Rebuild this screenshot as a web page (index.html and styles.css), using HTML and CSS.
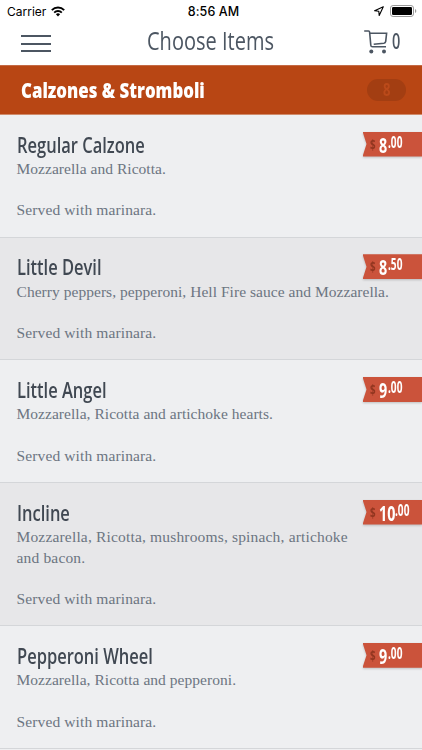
FILE: index.html
```html
<!DOCTYPE html>
<html lang="en">
<head>
  <meta charset="UTF-8" />
  <meta name="viewport" content="width=device-width, initial-scale=1.0"/>
  <title>Choose Items</title>
  <link rel="stylesheet" href="styles.css">
</head>
<body>
  <header>
    <div class="status-bar">
      <div class="carrier">
        <span>Carrier</span>
        <svg width="14" height="11" viewBox="0 0 14 11" fill="none" stroke="#000" stroke-width="1.9">
          <path d="M.8 4.1a8.8 8.8 0 0 1 12.4 0"/>
          <path d="M3.2 6.6a5.4 5.4 0 0 1 7.6 0"/>
          <path d="M7 10.4 4.9 8.3a3 3 0 0 1 4.2 0z" fill="#000" stroke="none"/>
        </svg>
      </div>
      <div class="time">8:56 AM</div>
      <div class="indicators">
        <svg width="10" height="10" viewBox="0 0 10 10" fill="none" stroke="#000" stroke-width="1.1" stroke-linejoin="round">
          <path d="M9.3.7.6 4.8l4.2.4.4 4.2z"/>
        </svg>
        <svg width="27" height="12" viewBox="0 0 27 12">
          <rect x=".5" y=".5" width="23" height="11" rx="2.6" fill="none" stroke="#999"/>
          <rect x="2" y="2" width="20" height="8" rx="1.3"/>
          <path d="M25 4v4q1.3-.6 1.3-2T25 4" fill="#999"/>
        </svg>
      </div>
    </div>
    <div class="nav-bar">
      <button class="menu" aria-label="Menu"><i></i><i></i><i></i></button>
      <h1><span class="condensed">Choose Items</span></h1>
      <button class="cart" aria-label="Cart">
        <svg width="24" height="24" viewBox="0 0 24 24" fill="none" stroke="#4c5662" stroke-width="1.6">
          <path d="M.2 1h4.3q1 0 1.1 1l1.2 13.2q.1 1.6 1.7 1.6H22"/>
          <path d="M6 3.3h16.6l-.9 8.1q-.2 1.6-1.8 1.8L9.7 14.2"/>
          <circle cx="7.3" cy="21.4" r="2" fill="#4c5662" stroke="none"/>
          <circle cx="20" cy="21.4" r="2" fill="#4c5662" stroke="none"/>
        </svg>
        <span class="condensed">0</span>
      </button>
    </div>
  </header>

  <div class="category">
    <h2><span class="condensed">Calzones &amp; Stromboli</span></h2>
    <span class="count"><span class="condensed">8</span></span>
  </div>

  <main>
    <section class="item">
      <div class="details">
        <h3><span class="condensed">Regular Calzone</span></h3>
        <p>Mozzarella and Ricotta.</p>
        <p>Served with marinara.</p>
      </div>
      <div class="price"><div class="ribbon"><small>$</small><b>8</b><sup>.00</sup></div></div>
    </section>
    <section class="item">
      <div class="details">
        <h3><span class="condensed">Little Devil</span></h3>
        <p>Cherry peppers, pepperoni, Hell Fire sauce and Mozzarella.</p>
        <p>Served with marinara.</p>
      </div>
      <div class="price"><div class="ribbon"><small>$</small><b>8</b><sup>.50</sup></div></div>
    </section>
    <section class="item">
      <div class="details">
        <h3><span class="condensed">Little Angel</span></h3>
        <p>Mozzarella, Ricotta and artichoke hearts.</p>
        <p>Served with marinara.</p>
      </div>
      <div class="price"><div class="ribbon"><small>$</small><b>9</b><sup>.00</sup></div></div>
    </section>
    <section class="item">
      <div class="details">
        <h3><span class="condensed">Incline</span></h3>
        <p class="loose">Mozzarella, Ricotta, mushrooms, spinach, artichoke<br>and bacon.</p>
        <p>Served with marinara.</p>
      </div>
      <div class="price"><div class="ribbon"><small>$</small><b class="wide">10</b><sup>.00</sup></div></div>
    </section>
    <section class="item">
      <div class="details">
        <h3><span class="condensed">Pepperoni Wheel</span></h3>
        <p>Mozzarella, Ricotta and pepperoni.</p>
        <p>Served with marinara.</p>
      </div>
      <div class="price"><div class="ribbon"><small>$</small><b>9</b><sup>.00</sup></div></div>
    </section>
  </main>
</body>
</html>
```
FILE: styles.css
```css
* {
  box-sizing: border-box;
}
body {
  font-family: "Open Sans", "Noto Sans", sans-serif;
  margin: 0;
  background: #eeeff1;
  overflow: hidden;
}
h1, h2, h3, p {
  margin: 0;
}
button {
  border: none;
  background: none;
  padding: 0;
  font-family: inherit;
}
svg {
  display: block;
}
.condensed {
  display: inline-block;
  white-space: nowrap;
  transform: scaleX(0.77);
  transform-origin: left center;
}
header {
  height: 65px;
  background: #fff;
}
.status-bar {
  height: 22px;
  padding: 0 5px 0 7px;
  display: grid;
  grid-template-columns: 1fr auto 1fr;
  align-items: center;
  font-family: Inter, "Liberation Sans", sans-serif;
  font-size: 12px;
}
.carrier, .indicators {
  display: flex;
  align-items: center;
  gap: 5px;
}
.time {
  font-weight: 500;
  font-size: 12.5px;
  letter-spacing: 0.1px;
  padding-left: 3px;
}
.indicators {
  justify-content: flex-end;
  gap: 6px;
}
.nav-bar {
  height: 43px;
  padding: 0 20px 0 21px;
  display: grid;
  grid-template-columns: 1fr 129px 1fr;
}
.menu {
  width: 30px;
  height: 17px;
  margin-top: 13px;
  display: flex;
  flex-direction: column;
  justify-content: space-between;
}
.menu i {
  width: 30px;
  height: 2px;
  background: #4c5662;
}
h1 {
  font-size: 26px;
  line-height: 36px;
  font-weight: 400;
  color: #4c5662;
}
.cart {
  display: flex;
  justify-self: end;
  width: 38px;
  margin-top: 8px;
  gap: 4px;
  align-items: flex-start;
  color: #4c5662;
}
.cart svg {
  flex: none;
}
.cart span {
  font-size: 22px;
  line-height: 20px;
  font-weight: 600;
  transform: scaleX(0.66);
}
.category {
  height: 50px;
  padding: 0 16px 0 21px;
  display: flex;
  align-items: center;
  justify-content: space-between;
  background: #b84614;
  border-top: 1px solid #c46a45;
  border-bottom: 1px solid #cf8b6b;
}
h2 {
  font-size: 20.5px;
  line-height: 30px;
  font-weight: 800;
  color: #fff;
}
h2 .condensed {
  transform: scaleX(0.82);
}
.count {
  width: 39px;
  height: 22px;
  border-radius: 11px;
  background: #a33e12;
  color: #bb4a1a;
  font-size: 17px;
  line-height: 22px;
  font-weight: 700;
  text-align: center;
}
.count .condensed {
  transform-origin: center;
}
.item {
  display: flex;
  justify-content: space-between;
  min-height: 122.7px;
  padding: 15.5px 0 15.3px 16.5px;
  background: #eeeff1;
  border-bottom: 1px solid #d4d6d9;
}
.item:nth-child(even) {
  background: #e7e7e9;
}
.details {
  width: 0;
  flex: 1;
  white-space: nowrap;
}
h3 {
  height: 28.5px;
  font-size: 21px;
  line-height: 28px;
  font-weight: 600;
  color: #404852;
}
h3 .condensed {
  transform: scaleX(0.785);
}
.details p {
  font-family: "Liberation Serif", serif;
  font-size: 15.5px;
  line-height: 20.7px;
  letter-spacing: 0.04px;
  color: #6c7581;
}
.details .loose {
  letter-spacing: 0.17px;
}
.details p + p {
  margin-top: 20.7px;
  letter-spacing: 0.12px;
}
.price {
  width: 59.5px;
  filter: drop-shadow(0 1px 1px rgba(0,0,0,0.2));
}
.ribbon {
  height: 25px;
  margin-top: 1px;
  padding-left: 7.5px;
  display: flex;
  background: #cb533b;
  color: #fff;
  clip-path: polygon(0 0, 100% 0, 100% 100%, 0 100%, 4px 50%);
}
.ribbon small, .ribbon b, .ribbon sup {
  transform: scaleX(0.65);
  transform-origin: left center;
  font-weight: 700;
  line-height: 25px;
}
.ribbon small {
  width: 9px;
  font-size: 15px;
  color: #923620;
}
.ribbon b {
  width: 8.5px;
  font-size: 22px;
}
.ribbon .wide {
  width: 15.5px;
}
.ribbon sup {
  font-size: 15.5px;
  line-height: 20px;
}
```
